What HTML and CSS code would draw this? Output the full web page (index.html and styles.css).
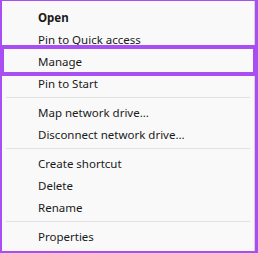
FILE: index.html
```html
<!DOCTYPE html>
<html lang="en">
<head>
    <meta charset="UTF-8">
    <meta name="viewport" content="width=device-width, initial-scale=1.0">
    <title>Context menu</title>
    <link rel="stylesheet" href="styles.css">
</head>
<body>
    <div class="context-menu">
        <div class="menu-item bold">Open</div>
        <div class="menu-item">Pin to Quick access</div>
        <div class="menu-item highlighted">Manage</div>
        <div class="menu-item">Pin to Start</div>
        <div class="separator"></div>
        <div class="menu-item">Map network drive...</div>
        <div class="menu-item">Disconnect network drive...</div>
        <div class="separator"></div>
        <div class="menu-item">Create shortcut</div>
        <div class="menu-item">Delete</div>
        <div class="menu-item">Rename</div>
        <div class="separator"></div>
        <div class="menu-item">Properties</div>
    </div>
</body>
</html>
```

FILE: styles.css
```css
html, body {
    margin: 0;
    height: 253px;
    background: #a94ef2;
}

.context-menu {
    margin: 1px 3px 2px 2px;
    height: 250px;
    box-sizing: border-box;
    padding: 5px 0;
    background: #f9f9f9;
    border-right: 1px solid #d6d6d6;
    font-family: "Noto Sans", sans-serif;
    font-size: 11.5px;
    color: #1a1a1a;
}

.menu-item {
    position: relative;
    height: 21px;
    padding-top: 1px;
    line-height: 22px;
    padding-left: 36px;
    white-space: nowrap;
}

.menu-item.bold {
    font-weight: bold;
}

.menu-item.highlighted::after {
    content: "";
    position: absolute;
    top: -5px;
    bottom: -4px;
    left: -2px;
    right: -3px;
    border: 4px solid #a94ef2;
}

.separator {
    height: 1px;
    margin: 3px 4px;
    background: #e2e2e2;
}
```
